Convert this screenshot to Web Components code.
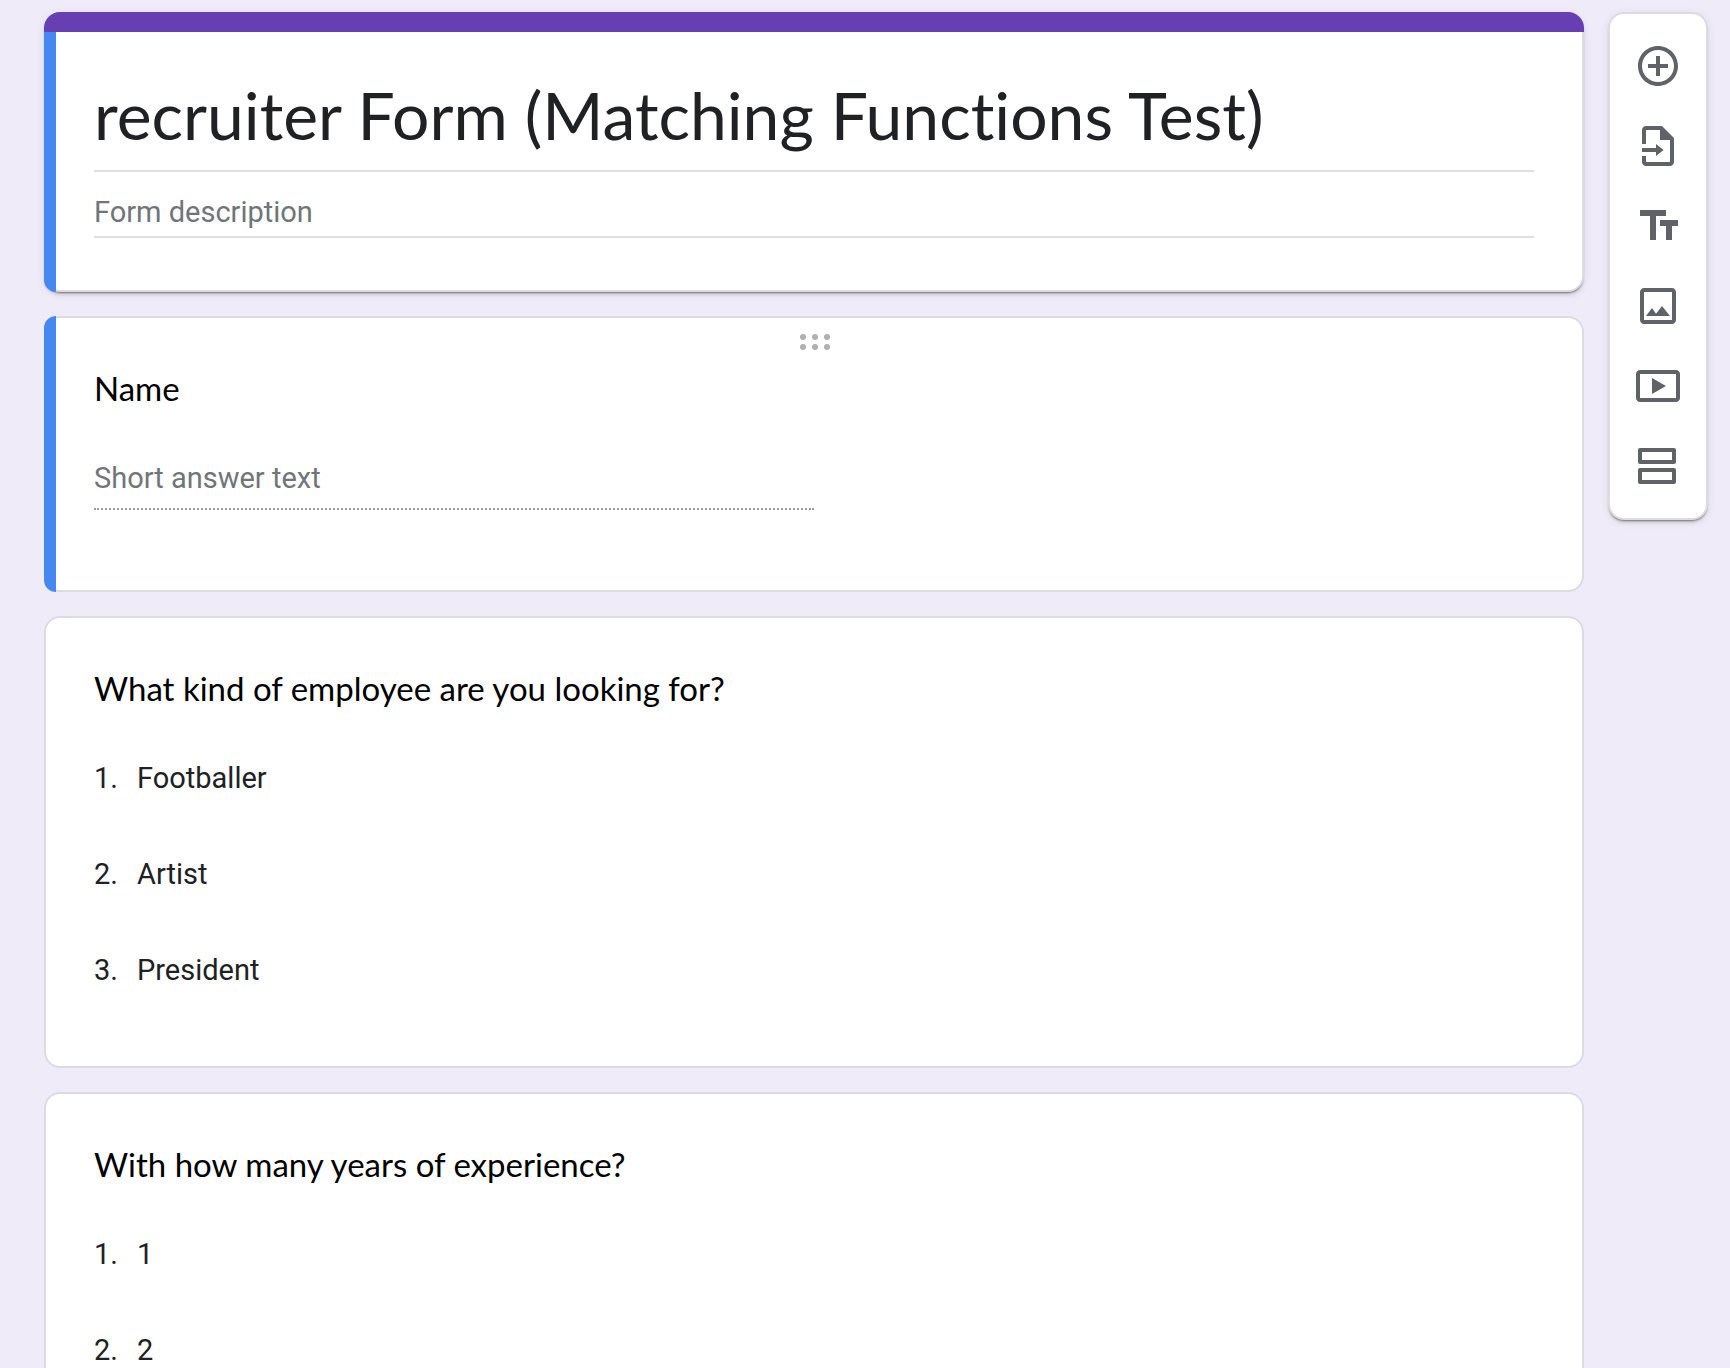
<!DOCTYPE html>
<html lang="en">
<head>
<meta charset="utf-8">
<meta name="viewport" content="width=device-width, initial-scale=1">
<title>recruiter Form (Matching Functions Test)</title>
<style>
  :root {
    --page: #efebf8;
    --accent: #673fb3;
    --focus: #4688f1;
    --line: #dadce0;
    --ink: #202124;
    --muted: #70757a;
    --icon: #5f6368;
    --display: "Google Sans", Lato, sans-serif;
    --body: Roboto, sans-serif;
    --lift: 0 4px 4px -2px rgba(0,0,0,.14), 0 2px 2px -1px rgba(0,0,0,.42), 0 2px 10px rgba(0,0,0,.08);
  }
  body { margin: 0; background: var(--page); color: var(--ink); font: 29px/40px var(--body); }
</style>
</head>
<body>
<form-editor>
  <form-header slot="cards" heading="recruiter Form (Matching Functions Test)"></form-header>
  <question-card slot="cards" heading="Name" active><short-answer></short-answer></question-card>
  <question-card slot="cards" heading="What kind of employee are you looking for?">
    <option-list options="Footballer|Artist|President"></option-list>
  </question-card>
  <question-card slot="cards" heading="With how many years of experience?">
    <option-list options="1|2"></option-list>
  </question-card>
  <tool-bar slot="tools"></tool-bar>
</form-editor>

<script>
const base = `<style>
  *, *::before, *::after { box-sizing: border-box; }
  input { display: block; width: 100%; margin: 0; padding: 0; border: 0; border-radius: 0; background: none; outline: 0; color: inherit; font: inherit; }
  input::placeholder { color: var(--muted); opacity: 1; }
</style>`;

const cardBox = `<style>
  :host { display: block; position: relative; box-sizing: border-box; background: #fff;
          border: 2px solid var(--line); border-radius: 16px; }
  .focus { position: absolute; left: -2px; bottom: -2px; top: -2px; width: 12px;
           background: var(--focus); border-radius: 16px 0 0 16px; }
</style>`;

class FormEditor extends HTMLElement {
  constructor() {
    super();
    this.attachShadow({ mode: 'open' }).innerHTML = base + `<style>
      :host { display: flex; gap: 24px; align-items: flex-start; box-sizing: border-box; height: 100vh;
              overflow-y: auto; scrollbar-width: none; padding: 12px 22px 0 44px; }
      main { flex: 1; min-width: 0; display: flex; flex-direction: column; gap: 24px; padding-bottom: 24px; }
      aside { flex: none; width: 100px; position: sticky; top: 0; }
    </style>
    <main><slot name="cards"></slot></main><aside><slot name="tools"></slot></aside>`;
  }
}

class FormHeader extends HTMLElement {
  constructor() {
    super();
    this.attachShadow({ mode: 'open' }).innerHTML = base + cardBox + `<style>
      :host { padding: 58px 48px 52px; box-shadow: var(--lift); }
      .band { position: absolute; left: -2px; right: -2px; top: -2px; height: 20px;
              background: var(--accent); border-radius: 16px 16px 0 0; }
      .focus { top: 18px; border-radius: 0 0 0 16px; }
      .title { height: 100px; padding-bottom: 14px; border-bottom: 2px solid #e0e0e0;
               font: 66px/80px var(--display); font-variant-ligatures: none; }
      .about { height: 46px; margin-top: 20px; padding-bottom: 4px; border-bottom: 2px solid #e0e0e0; }
    </style>
    <div class="band"></div><div class="focus"></div>
    <input class="title" type="text" aria-label="Form title">
    <input class="about" type="text" aria-label="Form description" placeholder="Form description">`;
  }
  connectedCallback() { this.shadowRoot.querySelector('.title').value = this.getAttribute('heading'); }
}

class QuestionCard extends HTMLElement {
  constructor() {
    super();
    this.attachShadow({ mode: 'open' }).innerHTML = base + cardBox + `<style>
      :host { padding: 46px 48px 48px; }
      :host([active]) { padding-bottom: 80px; }
      :host(:not([active])) .focus, :host(:not([active])) svg { display: none; }
      svg { position: absolute; top: 14px; left: 50%; margin-left: -18px; width: 40px; height: 24px; fill: #b0b0b0; }
      h2 { margin: 0; color: #000; font: 33px/48px var(--display); font-variant-ligatures: none; }
    </style>
    <div class="focus"></div>
    <svg viewBox="0 0 40 24" aria-hidden="true">
      <circle cx="7" cy="5" r="3"/><circle cx="19" cy="5" r="3"/><circle cx="31" cy="5" r="3"/>
      <circle cx="7" cy="15" r="3"/><circle cx="19" cy="15" r="3"/><circle cx="31" cy="15" r="3"/>
    </svg>
    <h2></h2><slot></slot>`;
  }
  connectedCallback() { this.shadowRoot.querySelector('h2').textContent = this.getAttribute('heading'); }
}

class ShortAnswer extends HTMLElement {
  constructor() {
    super();
    this.attachShadow({ mode: 'open' }).innerHTML = base + `<style>
      :host { display: block; width: 50%; min-width: 240px; padding-top: 46px; }
      input { height: 52px; padding: 0 0 10px; border-bottom: 2px dotted #9a9b9d; }
    </style>
    <input type="text" aria-label="Short answer text" placeholder="Short answer text" disabled>`;
  }
}

class OptionList extends HTMLElement {
  constructor() {
    super();
    this.attachShadow({ mode: 'open' }).innerHTML = base + `<style>
      :host { display: block; padding-top: 18px; }
      ol { margin: 0; padding: 0; list-style: none; }
      li { display: grid; grid-template-columns: 43px 1fr; align-items: center; min-height: 96px; }
    </style><ol></ol>`;
  }
  connectedCallback() {
    const ol = this.shadowRoot.querySelector('ol');
    ol.replaceChildren(...this.getAttribute('options').split('|').map((text, i) => {
      const li = document.createElement('li');
      const n = document.createElement('span');
      const t = document.createElement('span');
      n.textContent = `${i + 1}.`;
      t.textContent = text;
      li.append(n, t);
      return li;
    }));
  }
}

const tools = [
  ['Add question', 'M13 7h-2v4H7v2h4v4h2v-4h4v-2h-4V7zm-1-5C6.48 2 2 6.48 2 12s4.48 10 10 10 10-4.48 10-10S17.52 2 12 2zm0 18c-4.41 0-8-3.59-8-8s3.59-8 8-8 8 3.59 8 8-3.59 8-8 8z'],
  ['Import questions', 'M14 2H6c-1.1 0-2 .9-2 2v7h2V4h7v5h5v11H6v-3H4v3c0 1.1.9 2 2 2h12c1.1 0 2-.9 2-2V8l-6-6zM4 13v2h7v2l3.8-3-3.8-3v2H4z'],
  ['Add title and description', 'M3 4v3h5v12h3V7h5V4H3zM13 9v3h3v7h3v-7h3V9h-9z'],
  ['Add image', 'M19 5v14H5V5h14m0-2H5c-1.1 0-2 .9-2 2v14c0 1.1.9 2 2 2h14c1.1 0 2-.9 2-2V5c0-1.1-.9-2-2-2zM14 12l-3 3.9L9 13l-3 4h12l-4-5z'],
  ['Add video', 'M9 8v8l7-4zM21 4H3c-1.1 0-2 .9-2 2v12c0 1.1.9 2 2 2h18c1.1 0 2-.9 2-2V6c0-1.1-.9-2-2-2zm0 14H3V6h18v12z'],
  ['Add section', 'M19 5v4H4V5h15m1-2H3c-.55 0-1 .45-1 1v6c0 .55.45 1 1 1h17c.55 0 1-.45 1-1V4c0-.55-.45-1-1-1zM19 15v4H4v-4h15m1-2H3c-.55 0-1 .45-1 1v6c0 .55.45 1 1 1h17c.55 0 1-.45 1-1v-6c0-.55-.45-1-1-1z'],
];

class ToolBar extends HTMLElement {
  constructor() {
    super();
    this.attachShadow({ mode: 'open' }).innerHTML = base + `<style>
      :host { display: flex; flex-direction: column; box-sizing: border-box; padding: 12px 0; background: #fff;
              border: 2px solid var(--line); border-radius: 16px; box-shadow: var(--lift); }
      button { display: flex; align-items: center; justify-content: center; height: 80px; padding: 0;
               border: 0; background: none; cursor: pointer; }
      svg { width: 48px; height: 48px; fill: var(--icon); }
    </style>` + tools.map(([name, d]) =>
      `<button type="button" aria-label="${name}"><svg viewBox="0 0 24 24" aria-hidden="true"><path d="${d}"/></svg></button>`).join('');
  }
}

customElements.define('form-editor', FormEditor);
customElements.define('form-header', FormHeader);
customElements.define('question-card', QuestionCard);
customElements.define('short-answer', ShortAnswer);
customElements.define('option-list', OptionList);
customElements.define('tool-bar', ToolBar);
</script>
</body>
</html>
